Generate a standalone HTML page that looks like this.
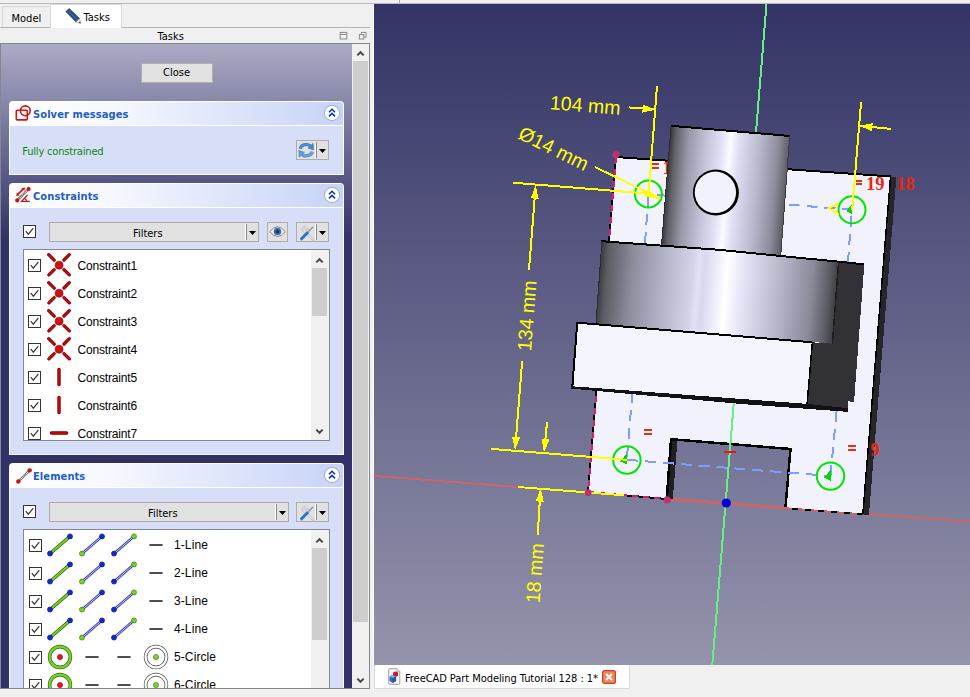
<!DOCTYPE html>
<html><head><meta charset="utf-8"><title>FreeCAD</title>
<style>
*{box-sizing:border-box;margin:0;padding:0}
html,body{width:970px;height:697px;overflow:hidden;background:#f0f0f0;font-family:"DejaVu Sans Condensed","Liberation Sans",sans-serif;font-size:11px;color:#000}
.abs{position:absolute}
.ui{font-size:11px;line-height:14px;white-space:nowrap}
#topline{left:0;top:3px;width:970px;height:1px;background:#b9b9b9}
#tabline{left:0;top:27px;width:370px;height:1px;background:#b4b4b4}
.tab{position:absolute}
#tabModel{left:2px;top:6px;width:49px;height:21px;border:1px solid #d9d9d9;border-bottom:none;background:#f0f0f0}
#tabTasks{left:50px;top:4px;width:72px;height:24px;border:1px solid #d9d9d9;border-bottom:none;background:#fff}
#panel{left:0;top:43px;width:370px;height:646px;border:1px solid #828790;background:linear-gradient(#ababc5 0px,#32326a 195px,#30306a 100%);overflow:hidden}
.box{position:absolute;left:8px;width:335px}
.hdr{position:absolute;left:0;top:0;width:335px;height:25px;border:1px solid #fff;border-bottom:none;border-radius:4px 4px 0 0;background:linear-gradient(90deg,#ffffff 0%,#f6f8fe 30%,#c7d3f7 100%)}
.hdr .t{position:absolute;left:23px;top:6px;letter-spacing:0.1px;font-weight:bold;color:#215dc6;font-size:11px;line-height:14px;white-space:nowrap;font-family:"DejaVu Sans Condensed","Liberation Sans",sans-serif}
.hdr svg{position:absolute}
.body{position:absolute;left:0;top:24px;width:335px;border:1px solid #fff;background:#d6dff7}
.btn{position:absolute;background:#e1e1e1;border:1px solid #adadad;text-align:center;line-height:18px;font-size:11px}
.cb{position:absolute;width:13px;height:13px;border:1px solid #333;background:#fff}
.cb svg{position:absolute;left:0;top:0}
.list{position:absolute;background:#fff;border:1px solid #828790;overflow:hidden}
.row{position:absolute;left:0;height:28px;width:290px}
.row .lbl{position:absolute;top:7px;letter-spacing:-0.17px;font-family:"Liberation Sans",sans-serif;font-size:12px;line-height:14px;white-space:nowrap}
.row svg{position:absolute}
.sb{position:absolute;background:#f0f0f0}
.thumb{position:absolute;background:#cdcdcd}
#view{left:374px;top:4px;width:596px;height:661px;background:linear-gradient(#333366,#9494ad);overflow:hidden}
#doctab{left:374px;top:665px;width:256px;height:24px;background:#fff;border:1px solid #d9d9d9;border-top:none}
</style></head><body>
<div class="abs" id="topline"></div>
<div class="abs" style="left:399px;top:0;width:1px;height:3px;background:#b0b0b0"></div>
<div class="abs" id="tabline"></div>
<div class="tab" id="tabModel"><span class="abs ui" style="left:8.5px;top:5px">Model</span></div>
<div class="tab" id="tabTasks"><svg class="abs" style="left:13px;top:3px" width="18" height="18" viewBox="63 7 18 18"><polygon points="64.7,10.6 68.2,7.5 78.7,17.5 74.9,20.9" fill="#2c4d80" stroke="#1c3560" stroke-width="0.5"/><line x1="66.6" y1="9.2" x2="76.8" y2="19.2" stroke="#4a74b0" stroke-width="1"/><polygon points="78.7,17.5 74.9,20.9 79.6,22.3" fill="#f6f6f6" stroke="#666" stroke-width="0.4"/><polygon points="78.9,20.6 79.7,22.4 77.8,21.8" fill="#222"/></svg><span class="abs ui" style="left:32.5px;top:5.5px">Tasks</span></div>
<div class="abs ui" style="left:157.5px;top:30px">Tasks</div>
<svg class="abs" style="left:339px;top:31px" width="10" height="10" viewBox="0 0 10 10"><rect x="1.2" y="1.4" width="6.6" height="6.6" fill="none" stroke="#8c8c8c"/><line x1="1.2" y1="3.4" x2="7.8" y2="3.4" stroke="#8c8c8c"/></svg><svg class="abs" style="left:358px;top:31px" width="10" height="10" viewBox="0 0 10 10"><rect x="3.4" y="1.4" width="4.6" height="4.6" fill="none" stroke="#8c8c8c"/><rect x="1.4" y="3.6" width="4.4" height="4.4" fill="#f0f0f0" stroke="#8c8c8c"/></svg>

<div class="abs" id="panel">
  <div class="btn ui" style="left:139.5px;top:18.5px;width:72px;height:20px">Close</div>

  <div class="box" style="top:57px;height:74px">
    <div class="hdr"><svg style="left:5px;top:2px" width="17" height="18" viewBox="15 104 17 18"><rect x="16.3" y="110.3" width="11" height="9.6" rx="1" fill="none" stroke="#cc1414" stroke-width="1.6"/><circle cx="25.3" cy="110.8" r="4.9" fill="none" stroke="#cc1414" stroke-width="1.6"/></svg><span class="t">Solver messages</span><svg style="left:313.3px;top:2.2px" width="18" height="18" viewBox="-9 -9 18 18"><circle cx="0" cy="0" r="7.7" fill="#fff" stroke="#aab6da" stroke-width="1.2"/><polyline points="-3,-0.8 0,-3.8 3,-0.8" fill="none" stroke="#0a32b4" stroke-width="1.5"/><polyline points="-3,3.4 0,0.4 3,3.4" fill="none" stroke="#0a32b4" stroke-width="1.5"/></svg></div>
    <div class="body" style="height:50px">
      <span class="abs ui" style="left:12.3px;top:18.5px;color:#0a860a;letter-spacing:-0.18px">Fully constrained</span>
      <div class="btn" style="left:286px;top:14px;width:33px;height:20px"><svg class="abs" style="left:-0.5px;top:-0.5px" width="18" height="18" viewBox="-0.4 -0.4 17.4 17.4"><path d="M2.8,7 A5.8,4.6 0 0 1 12.4,4.2" fill="none" stroke="#2f6cb0" stroke-width="3"/><path d="M2.8,7 A5.8,4.6 0 0 1 12.4,4.2" fill="none" stroke="#4f90d6" stroke-width="2"/><polygon points="10.2,6.4 15.2,1.8 15.6,8.2" fill="#4a8ad0" stroke="#2f6cb0" stroke-width="0.5"/><path d="M14.2,10 A5.8,4.6 0 0 1 4.6,12.8" fill="none" stroke="#2f6cb0" stroke-width="3"/><path d="M14.2,10 A5.8,4.6 0 0 1 4.6,12.8" fill="none" stroke="#68a6e4" stroke-width="2"/><polygon points="6.8,10.6 1.8,15.2 1.4,8.8" fill="#62a0e0" stroke="#2f6cb0" stroke-width="0.5"/></svg><div class="abs" style="left:18px;top:1px;width:1px;height:16px;background:#fff"></div><div class="abs" style="left:19px;top:1px;width:1px;height:16px;background:#8a8a8a"></div><svg class="abs" style="left:22px;top:7.6px" width="7" height="4" viewBox="0 0 7 4"><polygon points="0,0 7,0 3.5,4" fill="#000"/></svg></div>
    </div>
  </div>

  <div class="box" style="top:139px;height:272px">
    <div class="hdr"><svg style="left:5px;top:2px" width="18" height="18" viewBox="15 186 18 18"><line x1="17.2" y1="200.4" x2="28.6" y2="189" stroke="#5a5a5a" stroke-width="2.4"/><line x1="17.2" y1="200.4" x2="28.6" y2="189" stroke="#f4f4f4" stroke-width="1.3" stroke-dasharray="1 0.8"/><circle cx="17.2" cy="200.4" r="1.8" fill="#e01010" stroke="#900" stroke-width="0.5"/><circle cx="28.6" cy="189" r="1.8" fill="#e01010" stroke="#900" stroke-width="0.5"/><line x1="18" y1="194.2" x2="23.2" y2="189.2" stroke="#dc1010" stroke-width="1.8"/><polygon points="16.2,196 16.8,192.4 19.8,195.4" fill="#dc1010"/><polygon points="25,187.4 24.4,191 21.4,188" fill="#dc1010"/><polyline points="27.6,195 21.6,201.4 29.8,201.4" fill="none" stroke="#c01818" stroke-width="1.3"/><path d="M24.4,198.4 Q26.4,199 26.8,201.4" fill="none" stroke="#c01818" stroke-width="1.1"/></svg><span class="t">Constraints</span><svg style="left:313.3px;top:2.2px" width="18" height="18" viewBox="-9 -9 18 18"><circle cx="0" cy="0" r="7.7" fill="#fff" stroke="#aab6da" stroke-width="1.2"/><polyline points="-3,-0.8 0,-3.8 3,-0.8" fill="none" stroke="#0a32b4" stroke-width="1.5"/><polyline points="-3,3.4 0,0.4 3,3.4" fill="none" stroke="#0a32b4" stroke-width="1.5"/></svg></div>
    <div class="body" style="height:248px">
      <div class="cb" style="left:13px;top:17px"><svg width="11" height="11" viewBox="0 0 11 11"><polyline points="1.8,5.2 4.3,8.2 9.3,2.2" fill="none" stroke="#3a3a3a" stroke-width="1.25"/></svg></div>
      <div class="btn ui" style="left:39px;top:14px;width:210px;height:20px"><span class="abs" style="left:83px;top:2px">Filters</span><div class="abs" style="left:195px;top:1px;width:1px;height:16px;background:#fff"></div><div class="abs" style="left:196px;top:1px;width:1px;height:16px;background:#8a8a8a"></div><svg class="abs" style="left:199px;top:7.5px" width="7" height="4" viewBox="0 0 7 4"><polygon points="0,0 7,0 3.5,4" fill="#000"/></svg></div>
      <div class="btn" style="left:257px;top:14px;width:21px;height:20px"><svg class="abs" style="left:0.8px;top:2.2px" width="17" height="13" viewBox="-8.5 -6.5 17 13"><path d="M-7.7,0.2 Q0,-9.6 7.7,0.2 Q0,9.8 -7.7,0.2 Z" fill="#f4f4f4" stroke="#7a7a7a" stroke-width="0.9"/><circle cx="0" cy="0" r="3.8" fill="#3c70c8"/><circle cx="0" cy="0" r="1.9" fill="#30343c"/></svg></div>
      <div class="btn" style="left:286px;top:14px;width:33px;height:20px"><svg class="abs" style="left:1px;top:1px" width="18" height="17" viewBox="297 223 18 17"><path d="M301.6,227.6 a2.7,2.7 0 0 1 3.6,-2.4 l-1.6,1.8 l0.6,1.4 l1.6,0.4 l1.4,-1.8 a2.7,2.7 0 0 1 -2.6,3.4 L313,238.2 a1,1 0 0 1 -1.6,1.4 L303.4,231.6 a2.7,2.7 0 0 1 -1.8,-4 z" fill="#dcdee2" stroke="#b4b6bc" stroke-width="0.6"/><line x1="312.2" y1="225.8" x2="305.6" y2="232.6" stroke="#8e9aac" stroke-width="1.5"/><line x1="306.2" y1="232" x2="300.6" y2="237.8" stroke="#2f72c4" stroke-width="3" stroke-linecap="round"/></svg><div class="abs" style="left:18px;top:1px;width:1px;height:16px;background:#fff"></div><div class="abs" style="left:19px;top:1px;width:1px;height:16px;background:#8a8a8a"></div><svg class="abs" style="left:22px;top:7.5px" width="7" height="4" viewBox="0 0 7 4"><polygon points="0,0 7,0 3.5,4" fill="#000"/></svg></div>
      <div class="list" style="left:13px;top:41px;width:307px;height:192px" id="clist"><div class="row" style="top:2px"><div class="cb" style="left:4px;top:7px"><svg width="11" height="11" viewBox="0 0 11 11"><polyline points="1.8,5.2 4.3,8.2 9.3,2.2" fill="none" stroke="#3a3a3a" stroke-width="1.25"/></svg></div><div class="abs" style="left:35px;top:13.2px;width:0;height:0"><svg width="24" height="24" viewBox="-12 -12 24 24" style="left:-12px;top:-12px"><line x1="-10.3" y1="-10.3" x2="-4.8" y2="-4.8" stroke="#7a0000" stroke-width="3.2" stroke-linecap="round"/><line x1="5.0" y1="-5.0" x2="10.3" y2="-10.3" stroke="#7a0000" stroke-width="3.2" stroke-linecap="round"/><line x1="-10.1" y1="9.9" x2="-4.8" y2="4.6" stroke="#7a0000" stroke-width="3.2" stroke-linecap="round"/><line x1="5.0" y1="4.6" x2="10.3" y2="9.9" stroke="#7a0000" stroke-width="3.2" stroke-linecap="round"/><line x1="-10.3" y1="-10.3" x2="-4.8" y2="-4.8" stroke="#cc0a0a" stroke-width="1.6" stroke-linecap="round"/><line x1="5.0" y1="-5.0" x2="10.3" y2="-10.3" stroke="#cc0a0a" stroke-width="1.6" stroke-linecap="round"/><line x1="-10.1" y1="9.9" x2="-4.8" y2="4.6" stroke="#cc0a0a" stroke-width="1.6" stroke-linecap="round"/><line x1="5.0" y1="4.6" x2="10.3" y2="9.9" stroke="#cc0a0a" stroke-width="1.6" stroke-linecap="round"/><circle cx="0.1" cy="0.2" r="4" fill="#d40f0f" stroke="#a00000" stroke-width="0.6"/></svg></div><span class="lbl" style="left:53.5px">Constraint1</span></div><div class="row" style="top:30px"><div class="cb" style="left:4px;top:7px"><svg width="11" height="11" viewBox="0 0 11 11"><polyline points="1.8,5.2 4.3,8.2 9.3,2.2" fill="none" stroke="#3a3a3a" stroke-width="1.25"/></svg></div><div class="abs" style="left:35px;top:13.2px;width:0;height:0"><svg width="24" height="24" viewBox="-12 -12 24 24" style="left:-12px;top:-12px"><line x1="-10.3" y1="-10.3" x2="-4.8" y2="-4.8" stroke="#7a0000" stroke-width="3.2" stroke-linecap="round"/><line x1="5.0" y1="-5.0" x2="10.3" y2="-10.3" stroke="#7a0000" stroke-width="3.2" stroke-linecap="round"/><line x1="-10.1" y1="9.9" x2="-4.8" y2="4.6" stroke="#7a0000" stroke-width="3.2" stroke-linecap="round"/><line x1="5.0" y1="4.6" x2="10.3" y2="9.9" stroke="#7a0000" stroke-width="3.2" stroke-linecap="round"/><line x1="-10.3" y1="-10.3" x2="-4.8" y2="-4.8" stroke="#cc0a0a" stroke-width="1.6" stroke-linecap="round"/><line x1="5.0" y1="-5.0" x2="10.3" y2="-10.3" stroke="#cc0a0a" stroke-width="1.6" stroke-linecap="round"/><line x1="-10.1" y1="9.9" x2="-4.8" y2="4.6" stroke="#cc0a0a" stroke-width="1.6" stroke-linecap="round"/><line x1="5.0" y1="4.6" x2="10.3" y2="9.9" stroke="#cc0a0a" stroke-width="1.6" stroke-linecap="round"/><circle cx="0.1" cy="0.2" r="4" fill="#d40f0f" stroke="#a00000" stroke-width="0.6"/></svg></div><span class="lbl" style="left:53.5px">Constraint2</span></div><div class="row" style="top:58px"><div class="cb" style="left:4px;top:7px"><svg width="11" height="11" viewBox="0 0 11 11"><polyline points="1.8,5.2 4.3,8.2 9.3,2.2" fill="none" stroke="#3a3a3a" stroke-width="1.25"/></svg></div><div class="abs" style="left:35px;top:13.2px;width:0;height:0"><svg width="24" height="24" viewBox="-12 -12 24 24" style="left:-12px;top:-12px"><line x1="-10.3" y1="-10.3" x2="-4.8" y2="-4.8" stroke="#7a0000" stroke-width="3.2" stroke-linecap="round"/><line x1="5.0" y1="-5.0" x2="10.3" y2="-10.3" stroke="#7a0000" stroke-width="3.2" stroke-linecap="round"/><line x1="-10.1" y1="9.9" x2="-4.8" y2="4.6" stroke="#7a0000" stroke-width="3.2" stroke-linecap="round"/><line x1="5.0" y1="4.6" x2="10.3" y2="9.9" stroke="#7a0000" stroke-width="3.2" stroke-linecap="round"/><line x1="-10.3" y1="-10.3" x2="-4.8" y2="-4.8" stroke="#cc0a0a" stroke-width="1.6" stroke-linecap="round"/><line x1="5.0" y1="-5.0" x2="10.3" y2="-10.3" stroke="#cc0a0a" stroke-width="1.6" stroke-linecap="round"/><line x1="-10.1" y1="9.9" x2="-4.8" y2="4.6" stroke="#cc0a0a" stroke-width="1.6" stroke-linecap="round"/><line x1="5.0" y1="4.6" x2="10.3" y2="9.9" stroke="#cc0a0a" stroke-width="1.6" stroke-linecap="round"/><circle cx="0.1" cy="0.2" r="4" fill="#d40f0f" stroke="#a00000" stroke-width="0.6"/></svg></div><span class="lbl" style="left:53.5px">Constraint3</span></div><div class="row" style="top:86px"><div class="cb" style="left:4px;top:7px"><svg width="11" height="11" viewBox="0 0 11 11"><polyline points="1.8,5.2 4.3,8.2 9.3,2.2" fill="none" stroke="#3a3a3a" stroke-width="1.25"/></svg></div><div class="abs" style="left:35px;top:13.2px;width:0;height:0"><svg width="24" height="24" viewBox="-12 -12 24 24" style="left:-12px;top:-12px"><line x1="-10.3" y1="-10.3" x2="-4.8" y2="-4.8" stroke="#7a0000" stroke-width="3.2" stroke-linecap="round"/><line x1="5.0" y1="-5.0" x2="10.3" y2="-10.3" stroke="#7a0000" stroke-width="3.2" stroke-linecap="round"/><line x1="-10.1" y1="9.9" x2="-4.8" y2="4.6" stroke="#7a0000" stroke-width="3.2" stroke-linecap="round"/><line x1="5.0" y1="4.6" x2="10.3" y2="9.9" stroke="#7a0000" stroke-width="3.2" stroke-linecap="round"/><line x1="-10.3" y1="-10.3" x2="-4.8" y2="-4.8" stroke="#cc0a0a" stroke-width="1.6" stroke-linecap="round"/><line x1="5.0" y1="-5.0" x2="10.3" y2="-10.3" stroke="#cc0a0a" stroke-width="1.6" stroke-linecap="round"/><line x1="-10.1" y1="9.9" x2="-4.8" y2="4.6" stroke="#cc0a0a" stroke-width="1.6" stroke-linecap="round"/><line x1="5.0" y1="4.6" x2="10.3" y2="9.9" stroke="#cc0a0a" stroke-width="1.6" stroke-linecap="round"/><circle cx="0.1" cy="0.2" r="4" fill="#d40f0f" stroke="#a00000" stroke-width="0.6"/></svg></div><span class="lbl" style="left:53.5px">Constraint4</span></div><div class="row" style="top:114px"><div class="cb" style="left:4px;top:7px"><svg width="11" height="11" viewBox="0 0 11 11"><polyline points="1.8,5.2 4.3,8.2 9.3,2.2" fill="none" stroke="#3a3a3a" stroke-width="1.25"/></svg></div><div class="abs" style="left:35px;top:13.2px;width:0;height:0"><svg width="24" height="24" viewBox="-12 -12 24 24" style="left:-12px;top:-12px"><line x1="0" y1="-7.6" x2="0" y2="7.6" stroke="#7a0000" stroke-width="3.4" stroke-linecap="round"/><line x1="0" y1="-7.4" x2="0" y2="7.4" stroke="#cc0a0a" stroke-width="1.6" stroke-linecap="round"/></svg></div><span class="lbl" style="left:53.5px">Constraint5</span></div><div class="row" style="top:142px"><div class="cb" style="left:4px;top:7px"><svg width="11" height="11" viewBox="0 0 11 11"><polyline points="1.8,5.2 4.3,8.2 9.3,2.2" fill="none" stroke="#3a3a3a" stroke-width="1.25"/></svg></div><div class="abs" style="left:35px;top:13.2px;width:0;height:0"><svg width="24" height="24" viewBox="-12 -12 24 24" style="left:-12px;top:-12px"><line x1="0" y1="-7.6" x2="0" y2="7.6" stroke="#7a0000" stroke-width="3.4" stroke-linecap="round"/><line x1="0" y1="-7.4" x2="0" y2="7.4" stroke="#cc0a0a" stroke-width="1.6" stroke-linecap="round"/></svg></div><span class="lbl" style="left:53.5px">Constraint6</span></div><div class="row" style="top:170px"><div class="cb" style="left:4px;top:7px"><svg width="11" height="11" viewBox="0 0 11 11"><polyline points="1.8,5.2 4.3,8.2 9.3,2.2" fill="none" stroke="#3a3a3a" stroke-width="1.25"/></svg></div><div class="abs" style="left:35px;top:13.2px;width:0;height:0"><svg width="24" height="24" viewBox="-12 -12 24 24" style="left:-12px;top:-12px"><line x1="-7.6" y1="0" x2="7.6" y2="0" stroke="#7a0000" stroke-width="3.4" stroke-linecap="round"/><line x1="-7.4" y1="0" x2="7.4" y2="0" stroke="#cc0a0a" stroke-width="1.6" stroke-linecap="round"/></svg></div><span class="lbl" style="left:53.5px">Constraint7</span></div>
        <div class="sb" style="left:287px;top:0;width:18px;height:190px"><div class="thumb" style="left:1px;top:18px;width:15px;height:48px"></div><svg class="abs" style="left:3.5px;top:6.5px" width="9" height="7" viewBox="0 0 9 7"><polyline points="1.3,5.4 4.5,2.2 7.7,5.4" fill="none" stroke="#484848" stroke-width="2"/></svg><svg class="abs" style="left:3.5px;top:177.5px" width="9" height="7" viewBox="0 0 9 7"><polyline points="1.3,1.6 4.5,4.8 7.7,1.6" fill="none" stroke="#484848" stroke-width="2"/></svg></div>
      </div>
    </div>
  </div>

  <div class="box" style="top:419px;height:272px">
    <div class="hdr"><svg style="left:5.5px;top:3px" width="18" height="18" viewBox="15 466 18 18"><line x1="17.3" y1="480.5" x2="28.7" y2="469.3" stroke="#5a5a5a" stroke-width="2.4"/><line x1="17.3" y1="480.5" x2="28.7" y2="469.3" stroke="#f4f4f4" stroke-width="1.3" stroke-dasharray="1 0.8"/><circle cx="17.3" cy="480.5" r="1.9" fill="#e01010" stroke="#900" stroke-width="0.5"/><circle cx="28.7" cy="469.3" r="1.9" fill="#e01010" stroke="#900" stroke-width="0.5"/></svg><span class="t">Elements</span><svg style="left:313.3px;top:2.2px" width="18" height="18" viewBox="-9 -9 18 18"><circle cx="0" cy="0" r="7.7" fill="#fff" stroke="#aab6da" stroke-width="1.2"/><polyline points="-3,-0.8 0,-3.8 3,-0.8" fill="none" stroke="#0a32b4" stroke-width="1.5"/><polyline points="-3,3.4 0,0.4 3,3.4" fill="none" stroke="#0a32b4" stroke-width="1.5"/></svg></div>
    <div class="body" style="height:248px">
      <div class="cb" style="left:13px;top:17px"><svg width="11" height="11" viewBox="0 0 11 11"><polyline points="1.8,5.2 4.3,8.2 9.3,2.2" fill="none" stroke="#3a3a3a" stroke-width="1.25"/></svg></div>
      <div class="btn ui" style="left:39px;top:14px;width:240px;height:20px"><span class="abs" style="left:98px;top:2px">Filters</span><div class="abs" style="left:225px;top:1px;width:1px;height:16px;background:#fff"></div><div class="abs" style="left:226px;top:1px;width:1px;height:16px;background:#8a8a8a"></div><svg class="abs" style="left:229px;top:7.5px" width="7" height="4" viewBox="0 0 7 4"><polygon points="0,0 7,0 3.5,4" fill="#000"/></svg></div>
      <div class="btn" style="left:286px;top:14px;width:33px;height:20px"><svg class="abs" style="left:1px;top:1px" width="18" height="17" viewBox="297 223 18 17"><path d="M301.6,227.6 a2.7,2.7 0 0 1 3.6,-2.4 l-1.6,1.8 l0.6,1.4 l1.6,0.4 l1.4,-1.8 a2.7,2.7 0 0 1 -2.6,3.4 L313,238.2 a1,1 0 0 1 -1.6,1.4 L303.4,231.6 a2.7,2.7 0 0 1 -1.8,-4 z" fill="#dcdee2" stroke="#b4b6bc" stroke-width="0.6"/><line x1="312.2" y1="225.8" x2="305.6" y2="232.6" stroke="#8e9aac" stroke-width="1.5"/><line x1="306.2" y1="232" x2="300.6" y2="237.8" stroke="#2f72c4" stroke-width="3" stroke-linecap="round"/></svg><div class="abs" style="left:18px;top:1px;width:1px;height:16px;background:#fff"></div><div class="abs" style="left:19px;top:1px;width:1px;height:16px;background:#8a8a8a"></div><svg class="abs" style="left:22px;top:7.5px" width="7" height="4" viewBox="0 0 7 4"><polygon points="0,0 7,0 3.5,4" fill="#000"/></svg></div>
      <div class="list" style="left:13px;top:41px;width:307px;height:192px" id="elist"><div class="row" style="top:1px"><div class="cb" style="left:5px;top:8px"><svg width="11" height="11" viewBox="0 0 11 11"><polyline points="1.8,5.2 4.3,8.2 9.3,2.2" fill="none" stroke="#3a3a3a" stroke-width="1.25"/></svg></div><div class="abs" style="left:35.5px;top:13.5px;width:0;height:0"><svg width="28" height="26" viewBox="-14 -13 28 26" style="left:-14px;top:-13px"><line x1="-9" y1="7.8" x2="9" y2="-7.8" stroke="#2a5a0a" stroke-width="3.4"/><line x1="-9" y1="7.8" x2="9" y2="-7.8" stroke="#78d228" stroke-width="2"/><circle cx="-10" cy="8.6" r="2.5" fill="#1428d2" stroke="#0a1690" stroke-width="0.7"/><circle cx="10" cy="-8.6" r="2.5" fill="#1428d2" stroke="#0a1690" stroke-width="0.7"/></svg></div><div class="abs" style="left:67.5px;top:13.5px;width:0;height:0"><svg width="28" height="26" viewBox="-14 -13 28 26" style="left:-14px;top:-13px"><line x1="-9" y1="7.8" x2="9" y2="-7.8" stroke="#3a46b4" stroke-width="2.6"/><line x1="-9" y1="7.8" x2="9" y2="-7.8" stroke="#c8ccee" stroke-width="0.9"/><circle cx="-10" cy="8.6" r="2.5" fill="#78d228" stroke="#3c7a10" stroke-width="0.7"/><circle cx="10" cy="-8.6" r="2.5" fill="#1428d2" stroke="#0a1690" stroke-width="0.7"/></svg></div><div class="abs" style="left:99.5px;top:13.5px;width:0;height:0"><svg width="28" height="26" viewBox="-14 -13 28 26" style="left:-14px;top:-13px"><line x1="-9" y1="7.8" x2="9" y2="-7.8" stroke="#3a46b4" stroke-width="2.6"/><line x1="-9" y1="7.8" x2="9" y2="-7.8" stroke="#c8ccee" stroke-width="0.9"/><circle cx="-10" cy="8.6" r="2.5" fill="#1428d2" stroke="#0a1690" stroke-width="0.7"/><circle cx="10" cy="-8.6" r="2.5" fill="#78d228" stroke="#3c7a10" stroke-width="0.7"/></svg></div><div class="abs" style="left:131.5px;top:13.5px;width:0;height:0"><svg width="16" height="4" viewBox="-8 -2 16 4" style="left:-8px;top:-2px"><line x1="-6.6" y1="0" x2="6.6" y2="0" stroke="#3a3a3a" stroke-width="1.8"/></svg></div><span class="lbl" style="left:150px;top:7px;letter-spacing:0.1px">1-Line</span></div><div class="row" style="top:29px"><div class="cb" style="left:5px;top:8px"><svg width="11" height="11" viewBox="0 0 11 11"><polyline points="1.8,5.2 4.3,8.2 9.3,2.2" fill="none" stroke="#3a3a3a" stroke-width="1.25"/></svg></div><div class="abs" style="left:35.5px;top:13.5px;width:0;height:0"><svg width="28" height="26" viewBox="-14 -13 28 26" style="left:-14px;top:-13px"><line x1="-9" y1="7.8" x2="9" y2="-7.8" stroke="#2a5a0a" stroke-width="3.4"/><line x1="-9" y1="7.8" x2="9" y2="-7.8" stroke="#78d228" stroke-width="2"/><circle cx="-10" cy="8.6" r="2.5" fill="#1428d2" stroke="#0a1690" stroke-width="0.7"/><circle cx="10" cy="-8.6" r="2.5" fill="#1428d2" stroke="#0a1690" stroke-width="0.7"/></svg></div><div class="abs" style="left:67.5px;top:13.5px;width:0;height:0"><svg width="28" height="26" viewBox="-14 -13 28 26" style="left:-14px;top:-13px"><line x1="-9" y1="7.8" x2="9" y2="-7.8" stroke="#3a46b4" stroke-width="2.6"/><line x1="-9" y1="7.8" x2="9" y2="-7.8" stroke="#c8ccee" stroke-width="0.9"/><circle cx="-10" cy="8.6" r="2.5" fill="#78d228" stroke="#3c7a10" stroke-width="0.7"/><circle cx="10" cy="-8.6" r="2.5" fill="#1428d2" stroke="#0a1690" stroke-width="0.7"/></svg></div><div class="abs" style="left:99.5px;top:13.5px;width:0;height:0"><svg width="28" height="26" viewBox="-14 -13 28 26" style="left:-14px;top:-13px"><line x1="-9" y1="7.8" x2="9" y2="-7.8" stroke="#3a46b4" stroke-width="2.6"/><line x1="-9" y1="7.8" x2="9" y2="-7.8" stroke="#c8ccee" stroke-width="0.9"/><circle cx="-10" cy="8.6" r="2.5" fill="#1428d2" stroke="#0a1690" stroke-width="0.7"/><circle cx="10" cy="-8.6" r="2.5" fill="#78d228" stroke="#3c7a10" stroke-width="0.7"/></svg></div><div class="abs" style="left:131.5px;top:13.5px;width:0;height:0"><svg width="16" height="4" viewBox="-8 -2 16 4" style="left:-8px;top:-2px"><line x1="-6.6" y1="0" x2="6.6" y2="0" stroke="#3a3a3a" stroke-width="1.8"/></svg></div><span class="lbl" style="left:150px;top:7px;letter-spacing:0.1px">2-Line</span></div><div class="row" style="top:57px"><div class="cb" style="left:5px;top:8px"><svg width="11" height="11" viewBox="0 0 11 11"><polyline points="1.8,5.2 4.3,8.2 9.3,2.2" fill="none" stroke="#3a3a3a" stroke-width="1.25"/></svg></div><div class="abs" style="left:35.5px;top:13.5px;width:0;height:0"><svg width="28" height="26" viewBox="-14 -13 28 26" style="left:-14px;top:-13px"><line x1="-9" y1="7.8" x2="9" y2="-7.8" stroke="#2a5a0a" stroke-width="3.4"/><line x1="-9" y1="7.8" x2="9" y2="-7.8" stroke="#78d228" stroke-width="2"/><circle cx="-10" cy="8.6" r="2.5" fill="#1428d2" stroke="#0a1690" stroke-width="0.7"/><circle cx="10" cy="-8.6" r="2.5" fill="#1428d2" stroke="#0a1690" stroke-width="0.7"/></svg></div><div class="abs" style="left:67.5px;top:13.5px;width:0;height:0"><svg width="28" height="26" viewBox="-14 -13 28 26" style="left:-14px;top:-13px"><line x1="-9" y1="7.8" x2="9" y2="-7.8" stroke="#3a46b4" stroke-width="2.6"/><line x1="-9" y1="7.8" x2="9" y2="-7.8" stroke="#c8ccee" stroke-width="0.9"/><circle cx="-10" cy="8.6" r="2.5" fill="#78d228" stroke="#3c7a10" stroke-width="0.7"/><circle cx="10" cy="-8.6" r="2.5" fill="#1428d2" stroke="#0a1690" stroke-width="0.7"/></svg></div><div class="abs" style="left:99.5px;top:13.5px;width:0;height:0"><svg width="28" height="26" viewBox="-14 -13 28 26" style="left:-14px;top:-13px"><line x1="-9" y1="7.8" x2="9" y2="-7.8" stroke="#3a46b4" stroke-width="2.6"/><line x1="-9" y1="7.8" x2="9" y2="-7.8" stroke="#c8ccee" stroke-width="0.9"/><circle cx="-10" cy="8.6" r="2.5" fill="#1428d2" stroke="#0a1690" stroke-width="0.7"/><circle cx="10" cy="-8.6" r="2.5" fill="#78d228" stroke="#3c7a10" stroke-width="0.7"/></svg></div><div class="abs" style="left:131.5px;top:13.5px;width:0;height:0"><svg width="16" height="4" viewBox="-8 -2 16 4" style="left:-8px;top:-2px"><line x1="-6.6" y1="0" x2="6.6" y2="0" stroke="#3a3a3a" stroke-width="1.8"/></svg></div><span class="lbl" style="left:150px;top:7px;letter-spacing:0.1px">3-Line</span></div><div class="row" style="top:85px"><div class="cb" style="left:5px;top:8px"><svg width="11" height="11" viewBox="0 0 11 11"><polyline points="1.8,5.2 4.3,8.2 9.3,2.2" fill="none" stroke="#3a3a3a" stroke-width="1.25"/></svg></div><div class="abs" style="left:35.5px;top:13.5px;width:0;height:0"><svg width="28" height="26" viewBox="-14 -13 28 26" style="left:-14px;top:-13px"><line x1="-9" y1="7.8" x2="9" y2="-7.8" stroke="#2a5a0a" stroke-width="3.4"/><line x1="-9" y1="7.8" x2="9" y2="-7.8" stroke="#78d228" stroke-width="2"/><circle cx="-10" cy="8.6" r="2.5" fill="#1428d2" stroke="#0a1690" stroke-width="0.7"/><circle cx="10" cy="-8.6" r="2.5" fill="#1428d2" stroke="#0a1690" stroke-width="0.7"/></svg></div><div class="abs" style="left:67.5px;top:13.5px;width:0;height:0"><svg width="28" height="26" viewBox="-14 -13 28 26" style="left:-14px;top:-13px"><line x1="-9" y1="7.8" x2="9" y2="-7.8" stroke="#3a46b4" stroke-width="2.6"/><line x1="-9" y1="7.8" x2="9" y2="-7.8" stroke="#c8ccee" stroke-width="0.9"/><circle cx="-10" cy="8.6" r="2.5" fill="#78d228" stroke="#3c7a10" stroke-width="0.7"/><circle cx="10" cy="-8.6" r="2.5" fill="#1428d2" stroke="#0a1690" stroke-width="0.7"/></svg></div><div class="abs" style="left:99.5px;top:13.5px;width:0;height:0"><svg width="28" height="26" viewBox="-14 -13 28 26" style="left:-14px;top:-13px"><line x1="-9" y1="7.8" x2="9" y2="-7.8" stroke="#3a46b4" stroke-width="2.6"/><line x1="-9" y1="7.8" x2="9" y2="-7.8" stroke="#c8ccee" stroke-width="0.9"/><circle cx="-10" cy="8.6" r="2.5" fill="#1428d2" stroke="#0a1690" stroke-width="0.7"/><circle cx="10" cy="-8.6" r="2.5" fill="#78d228" stroke="#3c7a10" stroke-width="0.7"/></svg></div><div class="abs" style="left:131.5px;top:13.5px;width:0;height:0"><svg width="16" height="4" viewBox="-8 -2 16 4" style="left:-8px;top:-2px"><line x1="-6.6" y1="0" x2="6.6" y2="0" stroke="#3a3a3a" stroke-width="1.8"/></svg></div><span class="lbl" style="left:150px;top:7px;letter-spacing:0.1px">4-Line</span></div><div class="row" style="top:113px"><div class="cb" style="left:5px;top:8px"><svg width="11" height="11" viewBox="0 0 11 11"><polyline points="1.8,5.2 4.3,8.2 9.3,2.2" fill="none" stroke="#3a3a3a" stroke-width="1.25"/></svg></div><div class="abs" style="left:35.5px;top:13.5px;width:0;height:0"><svg width="28" height="28" viewBox="-14 -14 28 28" style="left:-14px;top:-14px"><circle cx="0" cy="0" r="10.4" fill="none" stroke="#2f6a0c" stroke-width="3.6"/><circle cx="0" cy="0" r="10.4" fill="none" stroke="#78d228" stroke-width="2.2"/><circle cx="0" cy="0" r="2.6" fill="#e01428" stroke="#a00010" stroke-width="0.6"/></svg></div><div class="abs" style="left:67.5px;top:13.5px;width:0;height:0"><svg width="16" height="4" viewBox="-8 -2 16 4" style="left:-8px;top:-2px"><line x1="-6.6" y1="0" x2="6.6" y2="0" stroke="#3a3a3a" stroke-width="1.8"/></svg></div><div class="abs" style="left:99.5px;top:13.5px;width:0;height:0"><svg width="16" height="4" viewBox="-8 -2 16 4" style="left:-8px;top:-2px"><line x1="-6.6" y1="0" x2="6.6" y2="0" stroke="#3a3a3a" stroke-width="1.8"/></svg></div><div class="abs" style="left:131.5px;top:13.5px;width:0;height:0"><svg width="28" height="28" viewBox="-14 -14 28 28" style="left:-14px;top:-14px"><circle cx="0" cy="0" r="10.4" fill="none" stroke="#4a4a4a" stroke-width="3.6"/><circle cx="0" cy="0" r="10.4" fill="none" stroke="#ffffff" stroke-width="2.2"/><circle cx="0" cy="0" r="2.6" fill="#78d228" stroke="#3c7a10" stroke-width="0.6"/></svg></div><span class="lbl" style="left:150px;top:7px;letter-spacing:0.1px">5-Circle</span></div><div class="row" style="top:141px"><div class="cb" style="left:5px;top:8px"><svg width="11" height="11" viewBox="0 0 11 11"><polyline points="1.8,5.2 4.3,8.2 9.3,2.2" fill="none" stroke="#3a3a3a" stroke-width="1.25"/></svg></div><div class="abs" style="left:35.5px;top:13.5px;width:0;height:0"><svg width="28" height="28" viewBox="-14 -14 28 28" style="left:-14px;top:-14px"><circle cx="0" cy="0" r="10.4" fill="none" stroke="#2f6a0c" stroke-width="3.6"/><circle cx="0" cy="0" r="10.4" fill="none" stroke="#78d228" stroke-width="2.2"/><circle cx="0" cy="0" r="2.6" fill="#e01428" stroke="#a00010" stroke-width="0.6"/></svg></div><div class="abs" style="left:67.5px;top:13.5px;width:0;height:0"><svg width="16" height="4" viewBox="-8 -2 16 4" style="left:-8px;top:-2px"><line x1="-6.6" y1="0" x2="6.6" y2="0" stroke="#3a3a3a" stroke-width="1.8"/></svg></div><div class="abs" style="left:99.5px;top:13.5px;width:0;height:0"><svg width="16" height="4" viewBox="-8 -2 16 4" style="left:-8px;top:-2px"><line x1="-6.6" y1="0" x2="6.6" y2="0" stroke="#3a3a3a" stroke-width="1.8"/></svg></div><div class="abs" style="left:131.5px;top:13.5px;width:0;height:0"><svg width="28" height="28" viewBox="-14 -14 28 28" style="left:-14px;top:-14px"><circle cx="0" cy="0" r="10.4" fill="none" stroke="#4a4a4a" stroke-width="3.6"/><circle cx="0" cy="0" r="10.4" fill="none" stroke="#ffffff" stroke-width="2.2"/><circle cx="0" cy="0" r="2.6" fill="#78d228" stroke="#3c7a10" stroke-width="0.6"/></svg></div><span class="lbl" style="left:150px;top:7px;letter-spacing:0.1px">6-Circle</span></div>
        <div class="sb" style="left:287px;top:0;width:18px;height:190px"><div class="thumb" style="left:1px;top:18px;width:15px;height:92px"></div><svg class="abs" style="left:3.5px;top:6.5px" width="9" height="7" viewBox="0 0 9 7"><polyline points="1.3,5.4 4.5,2.2 7.7,5.4" fill="none" stroke="#484848" stroke-width="2"/></svg></div>
      </div>
    </div>
  </div>

  <div class="sb" style="left:351px;top:0;width:17px;height:644px;background:#f0f0f0">
    <div class="thumb" style="left:1px;top:17px;width:15px;height:561px"></div><svg class="abs" style="left:4px;top:5.5px" width="9" height="7" viewBox="0 0 9 7"><polyline points="1.3,5.4 4.5,2.2 7.7,5.4" fill="none" stroke="#484848" stroke-width="2"/></svg><svg class="abs" style="left:4px;top:632.5px" width="9" height="7" viewBox="0 0 9 7"><polyline points="1.3,1.6 4.5,4.8 7.7,1.6" fill="none" stroke="#484848" stroke-width="2"/></svg>
  </div>
</div>

<div class="abs" style="left:373px;top:4px;width:1px;height:661px;background:#fff"></div>
<div class="abs" id="view">
<svg id="v3d" width="596" height="661" viewBox="374 4 596 661" style="position:absolute;left:0;top:0" shape-rendering="crispEdges">
<defs>
<linearGradient id="gUp" gradientUnits="userSpaceOnUse" x1="667" y1="185" x2="786" y2="195">
<stop offset="0" stop-color="#3c3c42"/><stop offset="0.04" stop-color="#606068"/><stop offset="0.15" stop-color="#9898a8"/><stop offset="0.30" stop-color="#c4c4d8"/><stop offset="0.43" stop-color="#e2e2f6"/><stop offset="0.50" stop-color="#fbfbff"/><stop offset="0.57" stop-color="#e0e0f4"/><stop offset="0.75" stop-color="#b8b8cc"/><stop offset="0.9" stop-color="#8c8c9c"/><stop offset="1" stop-color="#5a5a64"/>
</linearGradient>
<linearGradient id="gBig" gradientUnits="userSpaceOnUse" x1="599" y1="282" x2="835" y2="302">
<stop offset="0" stop-color="#3c3c42"/><stop offset="0.03" stop-color="#5c5c64"/><stop offset="0.14" stop-color="#8e8e9e"/><stop offset="0.27" stop-color="#b4b4c8"/><stop offset="0.39" stop-color="#d4d4e8"/><stop offset="0.415" stop-color="#e2e2f6"/><stop offset="0.44" stop-color="#d8d8ec"/><stop offset="0.49" stop-color="#ececfc"/><stop offset="0.535" stop-color="#ffffff"/><stop offset="0.60" stop-color="#e6e6f8"/><stop offset="0.77" stop-color="#b4b4c8"/><stop offset="0.90" stop-color="#888896"/><stop offset="0.97" stop-color="#5a5a62"/><stop offset="1" stop-color="#404046"/>
</linearGradient>
</defs>
<!-- red axis -->
<line x1="374" y1="476" x2="970" y2="521.7" stroke="#cc6666" stroke-width="2"/>
<!-- plate -->
<g id="plate">
<path d="M616,157 L890.6,176.5 L862.8,514.4 L785.4,508.2 L790.5,449 L671,439.2 L666.8,499 L588,492 Z" fill="#f2f2fc"/>
<polygon points="890.6,176.5 896.4,177 869,514.8 862.8,514.4" fill="#26262a"/>
<polygon points="671,439.2 677.5,439.8 672.8,499.5 666.8,499" fill="#202024"/>
<polyline points="616,157 890.6,176.5" fill="none" stroke="#000" stroke-width="2"/>
<polyline points="666.8,499 671,439.2 790.5,449 785.4,508.2" fill="none" stroke="#000" stroke-width="2.5"/>
<line x1="890.6" y1="176.5" x2="862.8" y2="514.4" stroke="#000" stroke-width="1.5"/>
</g>
<!-- sketch edge overlays (magenta/black dashes) -->
<g id="edges">
<line x1="616" y1="157" x2="588" y2="492" stroke="#000" stroke-width="2"/>
<line x1="616" y1="157" x2="588" y2="492" stroke="#d02070" stroke-width="2" stroke-dasharray="7 5"/>
<line x1="588" y1="492" x2="666.8" y2="499" stroke="#000" stroke-width="2"/>
<line x1="588" y1="492" x2="666.8" y2="499" stroke="#d02070" stroke-width="2" stroke-dasharray="6 5"/>
<line x1="785.4" y1="508.2" x2="862.8" y2="514.4" stroke="#000" stroke-width="2"/>
<line x1="785.4" y1="508.2" x2="862.8" y2="514.4" stroke="#cc6666" stroke-width="2" stroke-dasharray="7 6"/>
<line x1="666.8" y1="499.4" x2="785.4" y2="508.4" stroke="#cc6666" stroke-width="2"/>
</g>
<!-- green axis -->
<line x1="766.5" y1="4" x2="712.3" y2="665" stroke="#66f080" stroke-width="2"/>
<!-- blue construction dashes -->
<g stroke="#7f9cff" stroke-width="2" fill="none" stroke-dasharray="11 7">
<line x1="648.4" y1="196" x2="645" y2="243"/>
<line x1="632.4" y1="392" x2="626.8" y2="459.8"/>
<line x1="788.6" y1="204.7" x2="852" y2="209.7"/>
<line x1="851.4" y1="216" x2="848" y2="262"/>
<line x1="836.6" y1="411" x2="830.4" y2="476"/>
<line x1="626.8" y1="459.8" x2="830.4" y2="476"/>
</g>
<text x="662.6" y="174.4" font-family="'Liberation Serif','DejaVu Serif',serif" font-weight="bold" font-size="18.5" fill="#e6260e" shape-rendering="auto">1</text>
<line x1="650" y1="194.4" x2="668" y2="195.8" stroke="#7f9cff" stroke-width="2" stroke-dasharray="4 3 9 3"/>
<!-- solids -->
<g id="solids">
<polygon points="671.1,125.8 789.7,136 780,262 661,250" fill="url(#gUp)"/>
<polyline points="670.6,125.8 790.2,136" fill="none" stroke="#000" stroke-width="2"/>
<polyline points="661.6,244.3 671.1,125.8" fill="none" stroke="#2c2c30" stroke-width="1"/>
<polyline points="789.7,136 780.8,254.6" fill="none" stroke="#3a3a40" stroke-width="1"/>
<circle cx="715.9" cy="192.6" r="23" fill="#000" shape-rendering="auto"/><circle cx="715.4" cy="192.3" r="20.7" fill="#f2f2fc" shape-rendering="auto"/>
<polygon points="838.6,261.7 864.3,264.3 854,402.5 847.5,401 847.5,411.8 807.1,403.9 812.4,342.3 832.4,343.7" fill="#323236"/>
<polygon points="601.9,241.2 720,249.9 838.6,261.7 832.4,343.7 720,334 596,323.7" fill="url(#gBig)"/>
<polyline points="601.4,241.2 720,249.9 838.6,261.7 864.3,264.3" fill="none" stroke="#000" stroke-width="2"/>
<line x1="601.9" y1="241.2" x2="596" y2="323.7" stroke="#2c2c30" stroke-width="1"/>
<line x1="838.6" y1="261.7" x2="832.4" y2="343.7" stroke="#1e1e22" stroke-width="1.5"/>
<polygon points="577.2,322.7 812.4,342.3 807.1,403.9 572.3,386.6" fill="#f4f4fd"/>
<polyline points="812.4,342.3 577.2,322.7 572.3,387.3" fill="none" stroke="#000" stroke-width="2"/>
<polygon points="571.3,386.2 807.1,403.9 847.5,408.2 847.5,411.8 740,403.9 571.3,388.6" fill="#121214"/>
<line x1="812.4" y1="342.3" x2="807.1" y2="403.9" stroke="#000" stroke-width="1.5"/>
</g>
<!-- green circles -->
<g fill="none" stroke="#00e600" stroke-width="2" shape-rendering="auto">
<circle cx="648.4" cy="194" r="13.5"/><circle cx="852" cy="209.8" r="13.5"/><circle cx="626.9" cy="460" r="13.7"/><circle cx="830.5" cy="476.1" r="13.7"/>
</g>
<g fill="#00d800">
<polygon points="626.8,453.6 620.5,461.5 627,464.5"/>
<polygon points="830.6,470 824,477.6 830.6,481"/>
<polygon points="852.2,204 846.4,211 852.2,214.4"/>
</g>
<!-- yellow dimension lines -->
<g stroke="#ffff00" stroke-width="2" fill="none">
<line x1="657" y1="86" x2="648.6" y2="193.6"/>
<line x1="629" y1="107.4" x2="655.3" y2="109.5"/>
<line x1="861.1" y1="101.6" x2="852.2" y2="210"/>
<line x1="890.6" y1="128.9" x2="859.7" y2="125.8"/>
<line x1="513" y1="182.7" x2="648.6" y2="193.6"/>
<line x1="535.5" y1="188" x2="529" y2="269.8"/>
<line x1="522.2" y1="361" x2="515.2" y2="448"/>
<line x1="491.3" y1="448.9" x2="626.8" y2="459.8"/>
<line x1="547" y1="422.3" x2="544.4" y2="450"/>
<line x1="518" y1="487" x2="624.3" y2="495.3"/>
<line x1="540.4" y1="491" x2="537.7" y2="535.4"/>
<line x1="595" y1="167" x2="660" y2="198.6"/>
<polyline points="839,203.4 828.6,208.2 839,214"/>
</g>
<g fill="#ffff00">
<polygon points="655.8,109.6 642.3,112.7 642.9,104.6"/>
<polygon points="859.2,125.8 871.9,131.1 872.7,123.1"/>
<polygon points="535.7,185.4 538.7,198.9 530.7,198.3"/>
<polygon points="515,450.2 520,437.3 512,436.7"/>
<polygon points="544.2,452.2 549.4,439.5 541.4,438.7"/>
<polygon points="540.6,488.4 543.8,501.8 535.8,501.4"/>
<polygon points="662.4,199.6 647,189.2 644.8,196.8"/>
</g>
<!-- markers -->
<circle cx="616" cy="154.6" r="3.6" fill="#c0306e" shape-rendering="auto"/>
<circle cx="588.2" cy="492.6" r="3.4" fill="#c0306e" shape-rendering="auto"/>
<circle cx="667.2" cy="499.8" r="3.6" fill="#c0306e" shape-rendering="auto"/>
<circle cx="726.3" cy="503" r="4.6" fill="#0000e0" shape-rendering="auto"/>
<line x1="724" y1="452" x2="736" y2="452" stroke="#f01010" stroke-width="2"/>
<g fill="#e03018">
<rect x="651.6" y="163" width="7.6" height="2"/><rect x="651.6" y="166.6" width="7.6" height="2"/>
<rect x="855.6" y="180.2" width="6.2" height="1.6"/><rect x="855.6" y="183.4" width="6.2" height="1.6"/>
<rect x="644" y="429" width="8.2" height="2"/><rect x="644" y="432.8" width="8.2" height="2"/>
<rect x="848" y="445.4" width="7.6" height="2"/><rect x="848" y="449" width="7.6" height="2"/>
</g>
<g font-family="'Liberation Serif','DejaVu Serif',serif" font-weight="bold" font-size="18.5" fill="#e6260e" shape-rendering="auto">
<text x="866" y="189.8">19</text><text x="896" y="189.8">18</text><text x="870.4" y="456">9</text>
</g>
<g font-family="'Liberation Sans','DejaVu Sans',sans-serif" font-size="20" fill="#ffff00" shape-rendering="auto">
<text font-size="19.6" transform="translate(549.5,109.2) rotate(4.5)">104 mm</text>
<text font-size="19.6" transform="translate(517,138) rotate(26.2)">Ø14 mm</text>
<text font-size="19.6" transform="translate(531,351.5) rotate(-85.5)">134 mm</text>
<text font-size="19.6" transform="translate(539.6,603.5) rotate(-86)">18 mm</text>
</g>
</svg>

</div>
<div class="abs" id="doctab"><svg class="abs" style="left:13px;top:2.5px" width="13" height="17" viewBox="388 667.5 13 17"><path d="M388.7,669 Q388.7,668.2 389.5,668.2 L397,668.2 L399.8,671 L399.8,683 Q399.8,683.8 399,683.8 L389.5,683.8 Q388.7,683.8 388.7,683 Z" fill="#f4f4f4" stroke="#8c8c8c" stroke-width="0.8"/><path d="M397,668.2 L397,671 L399.8,671" fill="#dcdcdc" stroke="#9a9a9a" stroke-width="0.5"/><circle cx="395.6" cy="673.6" r="2.6" fill="#e01020"/><polygon points="389.8,676 392.8,674.6 395.8,676 395.8,680.4 392.8,682.2 389.8,680.4" fill="#2f6fc0" stroke="#1a4890" stroke-width="0.4"/><polygon points="389.8,676 392.8,674.6 395.8,676 392.8,677.4" fill="#7ab0ea"/><polygon points="392.8,677.4 395.8,676 395.8,680.4 392.8,682.2" fill="#24589e"/></svg><span class="abs ui" style="left:30px;top:7px;letter-spacing:-0.06px">FreeCAD Part Modeling Tutorial 128 : 1*</span><svg class="abs" style="left:226.5px;top:5px" width="14" height="14" viewBox="0 0 14 14"><rect x="0.6" y="0.6" width="12.8" height="12.8" rx="2" fill="#e8875e" stroke="#d43c2e" stroke-width="1.2"/><path d="M4,4 L10,10 M10,4 L4,10" stroke="#fff" stroke-width="2"/></svg></div>
</body></html>
